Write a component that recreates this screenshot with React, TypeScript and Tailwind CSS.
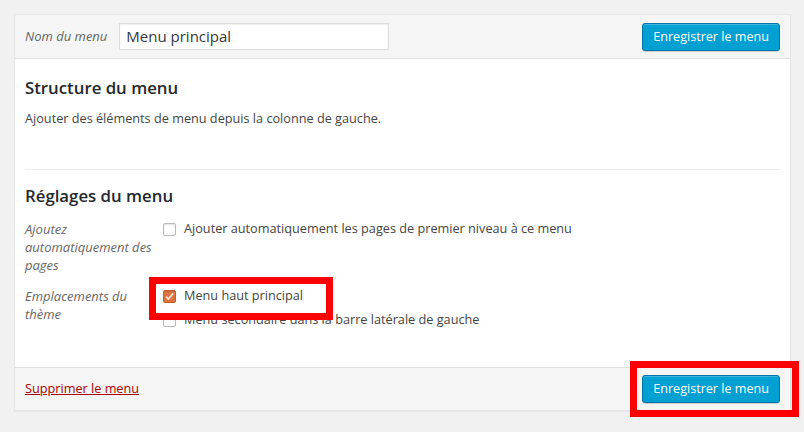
import React from 'react';

function Checkbox({ checked = false }: { checked?: boolean }) {
  return (
    <span
      className={`inline-flex h-[13px] w-[13px] shrink-0 items-center justify-center rounded-[2px] border ${
        checked ? 'border-[#c4602f] bg-[#e0743f]' : 'border-[#b4b9be] bg-white'
      } shadow-[inset_0_1px_2px_rgba(0,0,0,0.1)]`}
    >
      {checked && (
        <svg viewBox="0 0 12 12" className="h-[11px] w-[11px]">
          <path d="M2.2 6.2 L4.8 8.8 L10 2.6" fill="none" stroke="#f6e2d6" strokeWidth="1.8" />
        </svg>
      )}
    </span>
  );
}

function SaveButton() {
  return (
    <button className="h-[28px] rounded-[3px] border border-[#0073aa] bg-[#00a0d2] px-[10px] text-[12.6px] leading-[26px] text-white shadow-[inset_0_1px_0_rgba(120,200,230,0.5),0_1px_0_rgba(0,0,0,0.15)]">
      Enregistrer le menu
    </button>
  );
}

export default function App() {
  return (
    <div
      className="relative min-h-screen bg-[#f1f1f1] pl-[14px] pt-[14px] text-[#444]"
      style={{ fontFamily: '"Open Sans", "Noto Sans", sans-serif' }}
    >
      <div className="w-[777px] border border-[#e5e5e5] bg-white shadow-[0_1px_1px_rgba(0,0,0,0.04)]">
        {/* header */}
        <div className="flex h-[44px] items-center border-b border-[#dfdfdf] bg-[#f5f5f5] px-[10px]">
          <span className="text-[13px] italic text-[#666]">Nom du menu</span>
          <div className="ml-[12px] flex h-[27px] w-[270px] items-center border border-[#ddd] bg-white px-[6px] text-[15px] text-[#32373c] shadow-[inset_0_1px_2px_rgba(0,0,0,0.07)]">
            Menu principal
          </div>
          <div className="ml-auto">
            <SaveButton />
          </div>
        </div>

        {/* body */}
        <div className="px-[10px] pb-[38px] pt-[17px]">
          <h3 className="text-[16.8px] font-semibold leading-[24px] text-[#23282d]">Structure du menu</h3>
          <p className="mt-[8px] text-[12.7px] leading-[20px]">
            Ajouter des éléments de menu depuis la colonne de gauche.
          </p>

          <div className="mt-[41px] border-t border-[#eee]" />

          <h3 className="mt-[14px] text-[16.8px] font-semibold leading-[24px] text-[#23282d]">Réglages du menu</h3>

          <div className="mt-[12px] flex items-start">
            <div className="w-[138px] text-[13px] italic leading-[18px] text-[#666]">
              Ajoutez automatiquement des pages
            </div>
            <label className="flex h-[18px] items-center gap-[8px] text-[12.7px]">
              <Checkbox />
              <span>Ajouter automatiquement les pages de premier niveau à ce menu</span>
            </label>
          </div>

          <div className="mt-[13px] flex items-start">
            <div className="w-[138px] text-[13px] italic leading-[18px] text-[#666]">
              Emplacements du thème
            </div>
            <div className="flex flex-col gap-[6px]">
              <label className="flex h-[18px] items-center gap-[8px] text-[12.7px]">
                <Checkbox checked />
                <span>Menu haut principal</span>
              </label>
              <label className="flex h-[18px] items-center gap-[8px] text-[12.7px]">
                <Checkbox />
                <span>Menu secondaire dans la barre latérale de gauche</span>
              </label>
            </div>
          </div>
        </div>

        {/* footer */}
        <div className="flex h-[43px] items-center border-t border-[#dfdfdf] bg-[#f5f5f5] px-[10px]">
          <a href="#" className="text-[12.7px] text-[#a00] underline">
            Supprimer le menu
          </a>
          <div className="ml-auto">
            <SaveButton />
          </div>
        </div>
      </div>

      {/* annotation boxes */}
      <div className="pointer-events-none absolute left-[149px] top-[277px] h-[43px] w-[184px] border-[7px] border-[#ff0000]" />
      <div className="pointer-events-none absolute left-[630px] top-[361px] h-[56px] w-[169px] border-[7px] border-[#ff0000]" />
    </div>
  );
}
